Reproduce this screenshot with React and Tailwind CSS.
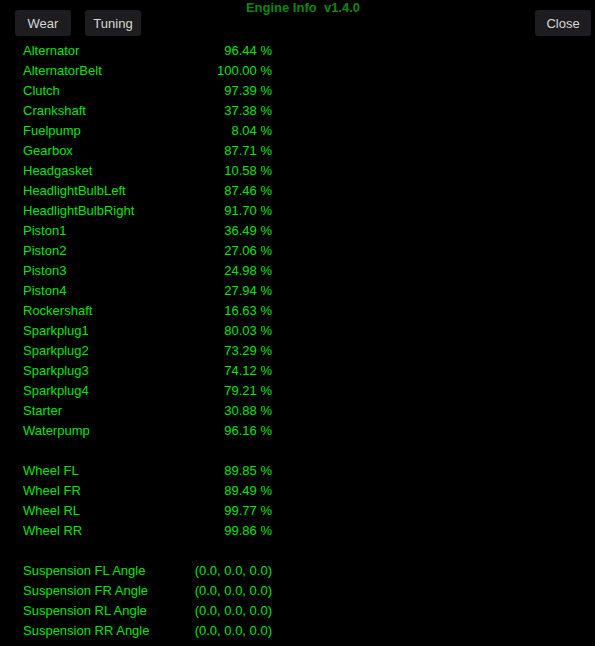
import React from "react";

const parts = [
  ["Alternator", "96.44 %"],
  ["AlternatorBelt", "100.00 %"],
  ["Clutch", "97.39 %"],
  ["Crankshaft", "37.38 %"],
  ["Fuelpump", "8.04 %"],
  ["Gearbox", "87.71 %"],
  ["Headgasket", "10.58 %"],
  ["HeadlightBulbLeft", "87.46 %"],
  ["HeadlightBulbRight", "91.70 %"],
  ["Piston1", "36.49 %"],
  ["Piston2", "27.06 %"],
  ["Piston3", "24.98 %"],
  ["Piston4", "27.94 %"],
  ["Rockershaft", "16.63 %"],
  ["Sparkplug1", "80.03 %"],
  ["Sparkplug2", "73.29 %"],
  ["Sparkplug3", "74.12 %"],
  ["Sparkplug4", "79.21 %"],
  ["Starter", "30.88 %"],
  ["Waterpump", "96.16 %"],
];

const wheels = [
  ["Wheel FL", "89.85 %"],
  ["Wheel FR", "89.49 %"],
  ["Wheel RL", "99.77 %"],
  ["Wheel RR", "99.86 %"],
];

const suspension = [
  ["Suspension FL Angle", "(0.0, 0.0, 0.0)"],
  ["Suspension FR Angle", "(0.0, 0.0, 0.0)"],
  ["Suspension RL Angle", "(0.0, 0.0, 0.0)"],
  ["Suspension RR Angle", "(0.0, 0.0, 0.0)"],
];

function Button({ children }) {
  return (
    <button
      type="button"
      className="h-[26px] w-[56px] rounded-[3px] bg-[#1d1d1f] pt-px text-[13px] text-[#d8d8d8]"
    >
      {children}
    </button>
  );
}

function Group({ rows }) {
  return (
    <div className="flex flex-col">
      {rows.map(([label, value]) => (
        <div key={label} className="flex h-5 w-[249px] items-center justify-between leading-5">
          <span>{label}</span>
          <span>{value}</span>
        </div>
      ))}
    </div>
  );
}

export default function App() {
  return (
    <div
      className="h-[646px] w-[595px] overflow-hidden bg-black"
      style={{ fontFamily: '"Liberation Sans", Arial, sans-serif' }}
    >
      <div className="grid grid-cols-[1fr_auto_1fr] items-start">
        <div className="flex gap-[14px] pl-[15px] pt-[10px]">
          <Button>Wear</Button>
          <Button>Tuning</Button>
        </div>
        <div className="whitespace-pre pl-[11px] text-[13px] font-bold leading-[15px] text-[#0b8a0b]">
          {"Engine Info  v1.4.0"}
        </div>
        <div className="flex justify-end pr-[4px] pt-[10px]">
          <Button>Close</Button>
        </div>
      </div>
      <div className="mt-[5px] flex flex-col gap-5 pl-[23px] text-[13px] text-[#00e600]">
        <Group rows={parts} />
        <Group rows={wheels} />
        <Group rows={suspension} />
      </div>
    </div>
  );
}
